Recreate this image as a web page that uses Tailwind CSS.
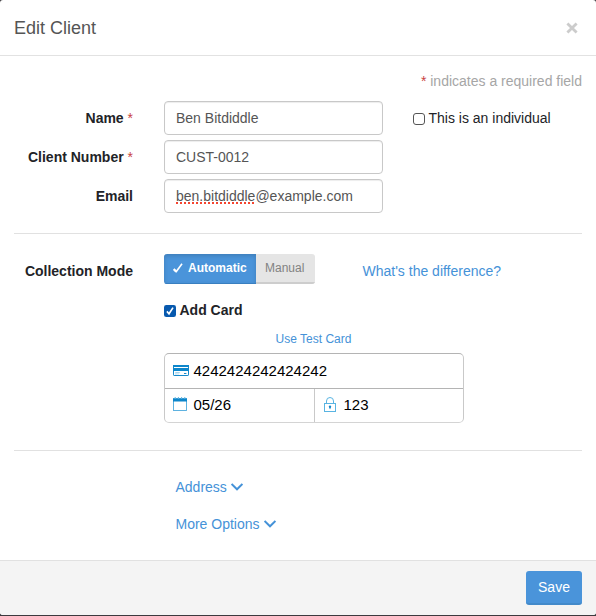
<!DOCTYPE html>
<html lang="en">
<head>
<meta charset="utf-8">
<title>Edit Client</title>
<script src="https://cdn.jsdelivr.net/npm/@tailwindcss/browser@4"></script>
</head>
<body class="bg-[#3c3a3e] font-['Liberation_Sans',Arial,sans-serif] text-[14px] leading-5 text-[#222327]">
<div class="flex h-[615px] w-[596px] flex-col overflow-hidden rounded-[3px] bg-white">
  <header class="flex h-14 shrink-0 items-center justify-between border-b border-[#e2e2e2] pr-[18px] pl-3.5">
    <h1 class="text-[18px] text-[#555]">Edit Client</h1>
    <svg class="size-3" viewBox="0 0 12 12" fill="none" stroke="#ccc" stroke-width="2.8"><path d="M1.4 1.4l9.2 9.2M10.6 1.4l-9.2 9.2"/></svg>
  </header>

  <main class="flex grow flex-col px-3.5">
    <p class="mt-[15px] h-5 text-right text-[#a6a6a6]"><span class="text-[#c9433f]">*</span> indicates a required field</p>

    <section class="mt-2.5 flex flex-col gap-[5px]">
      <div class="flex h-[34px] items-center">
        <label class="mr-[31px] w-[119px] text-right font-bold">Name <span class="font-normal text-[#c9433f]">*</span></label>
        <div class="flex h-[34px] w-[219px] items-center rounded-[4px] border border-[#c8c8c8] px-[11px] text-[#555] shadow-[inset_0_1px_1px_#00000013]">Ben Bitdiddle</div>
        <span class="mt-px ml-[30px] size-3 rounded-[3px] border border-[#555]"></span>
        <span class="ml-[3.5px]">This is an individual</span>
      </div>
      <div class="flex h-[34px] items-center">
        <label class="mr-[31px] w-[119px] text-right font-bold">Client Number <span class="font-normal text-[#c9433f]">*</span></label>
        <div class="flex h-[34px] w-[219px] items-center rounded-[4px] border border-[#c8c8c8] px-[11px] text-[#555] shadow-[inset_0_1px_1px_#00000013]">CUST-0012</div>
      </div>
      <div class="flex h-[34px] items-center">
        <label class="mr-[31px] w-[119px] text-right font-bold">Email</label>
        <div class="flex h-[34px] w-[219px] items-center rounded-[4px] border border-[#c8c8c8] px-[11px] text-[#555] shadow-[inset_0_1px_1px_#00000013]"><span class="underline decoration-[#f4442f] decoration-dotted decoration-2 underline-offset-1 [text-decoration-skip-ink:none]">ben.bitdiddle</span>@example.com</div>
      </div>
    </section>

    <hr class="mt-5 border-[#e1e1e1]">

    <section class="mt-5">
      <div class="flex h-[30px] items-center">
        <span class="mt-1 mr-[31px] w-[119px] text-right font-bold">Collection Mode</span>
        <div class="flex h-[30px] w-[151px] overflow-hidden rounded-[3px] text-[12px]">
          <div class="flex w-[92px] items-center border-b border-[#397fc0] bg-[#4a94da] pb-px pl-[9px] font-bold text-white shadow-[inset_0_2px_4px_#00000026]">
            <svg class="mr-[5px] h-[10px] w-[10px]" viewBox="0 0 10 10" fill="none" stroke="white"><path d="M.7 6.1l2.5 2.5" stroke-width="2.2"/><path d="M2.8 9.2L9 .7" stroke-width="1.6"/></svg>
            <span>Automatic</span>
          </div>
          <div class="flex grow items-center border-b-2 border-[#cdcdcd] bg-[#e5e5e5] pl-[9px] text-[#828282]">Manual</div>
        </div>
        <a class="mt-1 ml-[47.5px] text-[#4592d8]">What's the difference?</a>
      </div>

      <div class="ml-[150px] w-[300px]">
        <div class="mt-4 flex h-5 items-center font-bold">
          <svg class="mt-px mr-[3.5px] size-3" viewBox="0 0 12 12"><rect width="12" height="12" rx="2.3" fill="#0759ae"/><path d="M2.9 6.4l2.1 2.4 4-6.2" fill="none" stroke="white" stroke-width="1.6"/></svg>
          Add Card
        </div>
        <div class="mt-[9px] h-5 pr-px text-center text-[12px] text-[#4592d8]">Use Test Card</div>
        <div class="mt-1 h-[70px] overflow-hidden rounded-[5px] border border-t-[#b4b4b4] border-r-[#c9c9c9] border-b-[#d4d4d4] border-l-[#c9c9c9] text-[15px] text-black">
          <div class="flex h-[35px] items-center border-b border-[#b4b4b4] pb-px pl-[7.5px]">
            <svg class="mb-px h-[11px] w-[16px]" viewBox="0 0 16 11"><rect x=".5" y=".5" width="15" height="10" rx=".6" fill="white" stroke="#1689cb"/><path d="M0 0h16v2H0zM0 3h16v3H0z" fill="#0d86cb"/><path d="M2.3 7.7h4.5M2.3 9h1.3M4.5 9h1" stroke="#62b4df" stroke-width=".7"/><path d="M11 8.5h2.4" stroke="#1689cb" stroke-width="1.2"/></svg>
            <span class="ml-[5px]">4242424242424242</span>
          </div>
          <div class="flex h-[33px] pb-px">
            <div class="-mb-px flex w-[150px] items-center border-r border-[#c9c9c9] pb-px pl-2">
              <svg class="mb-[2px] h-[14px] w-[14px]" viewBox="0 0 14 14"><rect x=".5" y="2" width="13" height="11.5" fill="white" stroke="#4eaadd" stroke-width=".9"/><path d="M0 1.2h14v3.3H0z" fill="#0d86cb"/><path d="M2.2 0v2M5.4 0v2M8.6 0v2M11.8 0v2" stroke="#62b4df"/></svg>
              <span class="ml-[6.5px]">05/26</span>
            </div>
            <div class="flex items-center pl-[9px]">
              <svg class="mb-[2px] h-[15px] w-[12px]" viewBox="0 0 12 15" fill="none" stroke="#59b4e2"><rect x=".5" y="6.5" width="11" height="8"/><path d="M2.5 6.5V4a3.5 3.5 0 0 1 7 0v2.5"/><circle cx="6" cy="9.7" r="1.2" fill="#1689cb" stroke="none"/><path d="M6 10v2.1" stroke="#1689cb" stroke-width=".9"/></svg>
              <span class="ml-[7.5px]">123</span>
            </div>
          </div>
        </div>
      </div>
    </section>

    <hr class="mt-[27px] border-[#e1e1e1]">

    <nav class="mt-[26px] ml-[161.5px] flex flex-col gap-[17px] text-[#4592d8]">
      <a class="flex h-5 items-center">Address <svg class="ml-1 h-2 w-3" viewBox="0 0 12 8" fill="none" stroke="currentColor" stroke-width="1.9"><path d="M.6 1l5.4 5.3L11.4 1"/></svg></a>
      <a class="flex h-5 items-center">More Options <svg class="ml-1 h-2 w-3" viewBox="0 0 12 8" fill="none" stroke="currentColor" stroke-width="1.9"><path d="M.6 1l5.4 5.3L11.4 1"/></svg></a>
    </nav>
  </main>

  <footer class="flex h-[55px] shrink-0 items-center justify-end border-t border-[#e1e1e1] bg-[#f4f4f4] pr-3.5">
    <button class="h-[34px] w-14 rounded-[3px] border-b-2 border-[#438aca] bg-[#4a94da] text-white">Save</button>
  </footer>
</div>
</body>
</html>
